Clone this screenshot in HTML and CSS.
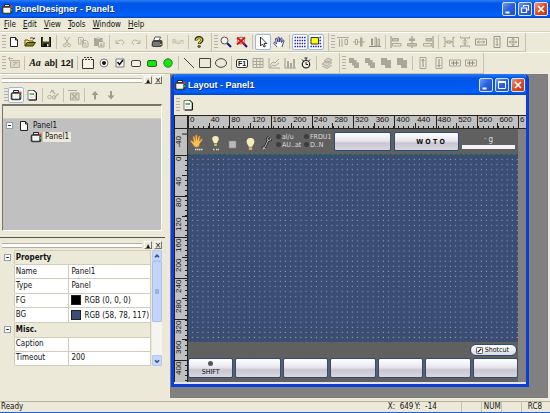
FILE: index.html
```html
<!DOCTYPE html>
<html lang="en">
<head>
    <meta charset="UTF-8">
    <meta name="viewport" content="width=device-width, initial-scale=1.0">
    <title>PanelDesigner - Panel1</title>
    <link rel="stylesheet" href="styles.css">
</head>
<body>
    <!-- Shared icons -->
    <svg class="sprite" aria-hidden="true">
        <symbol id="app" viewBox="0 0 12 12"><path d="M3.500 1.500h5v2h-5z" fill="#eee" stroke="#222"/><rect x=".7" y="3.200" width="10.600" height="8" rx="1.800" fill="#3a3a3a"/><rect x="2.300" y="4.700" width="7" height="5" rx=".6" fill="#f4f4f4"/><rect x="9.300" y="2.600" width="2.200" height="2.200" fill="#e33"/><rect x="9.800" y="6" width="1.400" height="2" fill="#2b2"/></symbol>
        <symbol id="new" viewBox="0 0 12 12"><path d="M2.500 1.500h5l2 2.500v6.500h-7z" fill="#fff" stroke="#222"/><path d="M7.500 1.500V4h2" fill="none" stroke="#222"/></symbol>
        <symbol id="open" viewBox="0 0 12 12"><path d="M1 10V4h3l1 1h4v1.500" fill="#ffe96b" stroke="#55520a"/><path d="M1 10l2-3.500h8.500L9 10z" fill="#8b860e" stroke="#33310a"/><path d="M6 2.500c1.500-1.200 3-1 4 .5M8.700 3h1.600V1.500" fill="none" stroke="#222" stroke-width=".8"/></symbol>
        <symbol id="save" viewBox="0 0 12 12"><path d="M1 1h10v10H1z" fill="#4a4a12"/><path d="M1.500 1.500h9v9h-9z" fill="none" stroke="#111"/><path d="M3 1h6v4.500H3z" fill="#eceada"/><path d="M3.500 7.500H9V11H3.500z" fill="#111"/><path d="M7 8h1.500v2.500H7z" fill="#ddd"/></symbol>
        <symbol id="cut" viewBox="0 0 12 12"><path d="M3.500 1l4 7M8.500 1l-4 7" fill="none" stroke="#b4b1a2"/><circle cx="3.800" cy="9.300" r="1.500" fill="none" stroke="#b4b1a2"/><circle cx="8.200" cy="9.300" r="1.500" fill="none" stroke="#b4b1a2"/></symbol>
        <symbol id="copy" viewBox="0 0 12 12"><path d="M1.500 1.500h4l1 1v5.500h-5zM5.500 4.500h4l1.500 1.500v5h-5.500z" fill="#ece9d8" stroke="#b4b1a2"/><path d="M3 4h2M3 6h2M7 7h2.500M7 9h2.500" stroke="#b4b1a2"/></symbol>
        <symbol id="paste" viewBox="0 0 12 12"><path d="M1 2h8.500v8H1z" fill="#aaa798"/><path d="M3.500 1h3.500v2H3.500z" fill="#d2cfbf"/><path d="M5.500 5.500H10l1 1v4.500H5.500z" fill="#e8e5d5" stroke="#aaa798"/><path d="M7 8h2.500M7 9.500h2.500" stroke="#aaa798"/></symbol>
        <symbol id="undo" viewBox="0 0 12 12"><path d="M2 4v3.500h3.500M2.500 7C4 4 8 3 9.500 5.500c.8 1.500 0 3-1.500 3" fill="none" stroke="#b4b1a2"/></symbol>
        <symbol id="redo" viewBox="0 0 12 12"><path d="M10 4v3.500H6.500M9.500 7C8 4 4 3 2.500 5.500c-.8 1.500 0 3 1.500 3" fill="none" stroke="#b4b1a2"/></symbol>
        <symbol id="print" viewBox="0 0 12 12"><path d="M4 1h5.500L8 5H2.500z" fill="#fff" stroke="#333" stroke-width=".8"/><path d="M1 5.500l2-1.500h7.500l1 1.500v4L9.500 11H2L.5 9.500z" fill="#444"/><path d="M2 7h7M2 9h7" stroke="#aaa"/><path d="M9 8.500h1.500" stroke="#dd3"/></symbol>
        <symbol id="help" viewBox="0 0 12 12"><path d="M3 4.500C3 .6 9.200.6 9 4c0 2-2.800 1.800-2.800 4" fill="none" stroke="#222" stroke-width="3"/><path d="M3.300 4.200C3.500 1.200 8.700 1.200 8.600 4c0 1.800-2.500 1.800-2.500 3.500" fill="none" stroke="#d6ce24" stroke-width="1.400"/><circle cx="6.100" cy="10.200" r="1.500" fill="#222"/><circle cx="6" cy="10" r=".8" fill="#d6ce24"/></symbol>
        <symbol id="zoomin" viewBox="0 0 12 12"><path d="M7 7l4 4" stroke="#14148c" stroke-width="2.200"/><circle cx="4.500" cy="4.500" r="3.500" fill="#f2f2ec" stroke="#555"/></symbol>
        <symbol id="zoomoff" viewBox="0 0 12 12"><path d="M7 7l4 4" stroke="#14148c" stroke-width="2.200"/><circle cx="5" cy="4.500" r="3.500" fill="#eee" stroke="#777"/><path d="M1 1.500l8 7M9 1.500l-8 7" stroke="#e01212" stroke-width="2"/></symbol>
        <symbol id="arrow" viewBox="0 0 12 12"><path d="M3.500 1v9l2-2 1.500 3 1.300-.6L7 7.500h2.800z" fill="#fff" stroke="#222" stroke-width=".9"/></symbol>
        <symbol id="pan" viewBox="0 0 12 12"><path d="M4 11L1 7.500c-.6-1 .5-1.600 1.200-.8L3.500 8 2.500 3c0-1 1.100-1.200 1.400-.2L5 6V1.800c0-1 1.300-1 1.400 0L6.700 6l1-3.500c.3-1 1.500-.7 1.300.3L8.600 6.500l1.200-2c.6-.8 1.500-.2 1.200.7L9.500 9 9 11" fill="#fff" stroke="#2a2a8c" stroke-width=".9"/></symbol>
        <symbol id="grid" viewBox="0 0 12 12"><path d="M.5 1.500h11M.5 4.500h11M.5 7.500h11M.5 10.500h11" stroke="#1818a0" stroke-width="1.400" stroke-dasharray="1.400 1"/></symbol>
        <symbol id="snap" viewBox="0 0 12 12"><path d="M.5 10.500h11M9.500 1.500h2.500M9.500 4.500h2.500M9.500 7.500h2.500" stroke="#1818a0" stroke-width="1.400" stroke-dasharray="1.400 1"/><path d="M1 1.500h7.500V8H1z" fill="#ffff10" stroke="#333"/></symbol>
        <symbol id="altop" viewBox="0 0 12 12"><path d="M0 1.500h12" stroke="#aaa798"/><path d="M2.500 3v8M5 3v8" stroke="#aaa798" /><path d="M8 3.500h2.500v5H8z" fill="none" stroke="#aaa798"/></symbol>
        <symbol id="almid" viewBox="0 0 12 12"><path d="M0 6h12" stroke="#aaa798"/><path d="M2.500 3.500h2v5h-2z" fill="#ece9d8" stroke="#aaa798"/><path d="M7 1.500h2.500v9H7z" fill="#aaa798"/></symbol>
        <symbol id="albot" viewBox="0 0 12 12"><path d="M0 10.500h12" stroke="#8f8c7e"/><path d="M2 2.500h2v7H2z" fill="#9c998b"/><path d="M6 1.500h1.500v8.500H6zM9 3h1.500v7H9z" fill="none" stroke="#aaa798"/></symbol>
        <symbol id="alleft" viewBox="0 0 12 12"><path d="M1 0v12" stroke="#8f8c7e"/><path d="M2.500 2.500h6v2.500h-6z" fill="#c4c1b1" stroke="#aaa798"/><path d="M2.500 7.500h8.500V10H2.500z" fill="none" stroke="#aaa798"/></symbol>
        <symbol id="alcen" viewBox="0 0 12 12"><path d="M6 0v12" stroke="#8f8c7e"/><path d="M3 2.500h6V5H3z" fill="#aaa798"/><path d="M1.500 7.500h9V10h-9z" fill="#c4c1b1" stroke="#aaa798"/></symbol>
        <symbol id="alright" viewBox="0 0 12 12"><path d="M11 0v12" stroke="#8f8c7e"/><path d="M4 2.500h5.500V5H4z" fill="#c4c1b1" stroke="#aaa798"/><path d="M1.500 7.500h8V10h-8z" fill="none" stroke="#aaa798"/></symbol>
        <symbol id="spacex" viewBox="0 0 12 12"><path d="M.5 1.500h1.500v9H.5M11.500 1.500H10v9h1.500M2.500 6h7M5.500 4l-2 2 2 2M6.500 4l2 2-2 2" fill="none" stroke="#9c998b" stroke-width=".9"/></symbol>
        <symbol id="spacey" viewBox="0 0 12 12"><path d="M1.500.5V2h9V.5M1.500 11.500V10h9v1.500M6 2.500v7M4 5.500l2-2 2 2M4 6.500l2 2 2-2" fill="none" stroke="#9c998b" stroke-width=".9"/></symbol>
        <symbol id="samew" viewBox="0 0 12 12"><path d="M.5 3h11v6H.5z" fill="none" stroke="#9c998b"/><path d="M2 6h8M4 4.500L2.500 6 4 7.500M8 4.500L9.500 6 8 7.500" fill="none" stroke="#9c998b" stroke-width=".9"/></symbol>
        <symbol id="sameh" viewBox="0 0 12 12"><path d="M3 .5h6v11H3z" fill="none" stroke="#9c998b"/><path d="M6 2v8M4.500 4L6 2.500 7.500 4M4.500 8L6 9.500 7.500 8" fill="none" stroke="#9c998b" stroke-width=".9"/></symbol>
        <symbol id="same" viewBox="0 0 12 12"><path d="M.5 1.500h11v9H.5z" fill="none" stroke="#9c998b"/><path d="M2 6h8M6 2v8M4 4.500L2.500 6 4 7.500M8 4.500L9.500 6 8 7.500M4.500 4L6 2.500 7.500 4M4.500 8L6 9.500 7.500 8" fill="none" stroke="#9c998b" stroke-width=".9"/></symbol>
        <symbol id="layout" viewBox="0 0 12 12"><path d="M2.500 3.500h9v7h-9z" fill="#ddd9c8" stroke="#b4b1a2"/><path d="M0 1.500h5M1.500 0v4M5 8.500l4-3M5 5.500h5" stroke="#b4b1a2"/></symbol>
        <symbol id="tabs" viewBox="0 0 12 12"><path d="M.5 2.500h11v9H.5z" fill="#f6f4ea" stroke="#333"/><path d="M2 .5h8" stroke="#333" stroke-dasharray="2 1"/><path d="M2 2.500h8" stroke="#f6f4ea" stroke-dasharray="1 2"/></symbol>
        <symbol id="radio" viewBox="0 0 12 12"><circle cx="6" cy="6" r="4" fill="#fff" stroke="#777"/><circle cx="6" cy="6" r="2" fill="#111"/></symbol>
        <symbol id="check" viewBox="0 0 12 12"><path d="M2 2h8v8H2z" fill="#fff" stroke="#777"/><path d="M3.500 5l2 2.500 3.500-4.500" fill="none" stroke="#111" stroke-width="1.600"/></symbol>
        <symbol id="btn" viewBox="0 0 12 12"><rect x="1.500" y="3.500" width="9" height="6" rx="1.500" fill="#f4f2e8" stroke="#444"/></symbol>
        <symbol id="gbtn" viewBox="0 0 12 12"><rect x="1.500" y="3.500" width="9" height="6" rx="1.500" fill="#14e614" stroke="#246424"/></symbol>
        <symbol id="lamp" viewBox="0 0 12 12"><circle cx="6" cy="6" r="4.200" fill="#14e614" stroke="#2b7a2b"/></symbol>
        <symbol id="line" viewBox="0 0 12 12"><path d="M1 1l10 10" stroke="#444"/></symbol>
        <symbol id="rect" viewBox="0 0 12 12"><path d="M.5 1.500h11v9H.5z" fill="none" stroke="#444"/></symbol>
        <symbol id="oval" viewBox="0 0 12 12"><ellipse cx="6" cy="6" rx="5.500" ry="4.300" fill="none" stroke="#444"/></symbol>
        <symbol id="table" viewBox="0 0 12 12"><path d="M1 1.500h10v9H1zM1 4.500h10M1 7.500h10M4.500 1.500v9M8 1.500v9" fill="none" stroke="#aaa798"/></symbol>
        <symbol id="chart" viewBox="0 0 12 12"><path d="M1 1v10h11M2 8l3-3 2 1 4-4M2 10l3-2 2 1 4-3" fill="none" stroke="#aaa798"/></symbol>
        <symbol id="bars" viewBox="0 0 12 12"><path d="M1 1v10h11" fill="none" stroke="#9c998b"/><path d="M4 4v6.500M7 6v4.500M10 2v8.500" stroke="#9c998b" stroke-width="1.600"/></symbol>
        <symbol id="timer" viewBox="0 0 12 12"><path d="M4.500 1h3M6 1v2M2 2.500l1.500 1.500M10 2.500L8.500 4" stroke="#222"/><circle cx="6" cy="7.200" r="3.700" fill="#f4f2e8" stroke="#222" stroke-width="1.200"/><path d="M6 5v2.500h2" fill="none" stroke="#222"/></symbol>
        <symbol id="stack" viewBox="0 0 12 12"><path d="M1 7l5-3 5 1.500-5 3.500zM1 9l5 2.500L11 8M3 4l4-3 4 2-4 3z" fill="#d8d5c5" stroke="#aaa798" stroke-width=".9"/></symbol>
        <symbol id="order1" viewBox="0 0 12 12"><path d="M1 1h5v2h2.500v2.500H11V11H6V8.500H4V6H1z" fill="#aaa798"/></symbol>
        <symbol id="order2" viewBox="0 0 12 12"><path d="M1 1h6v2h4v8H5V8H1z" fill="#aaa798"/></symbol>
        <symbol id="centy" viewBox="0 0 12 12"><path d="M3 .5h6v11H3z" fill="none" stroke="#aaa798"/><path d="M6 2v8M4.500 4L6 2.500 7.500 4" fill="none" stroke="#8f8c7e"/></symbol>
        <symbol id="centx" viewBox="0 0 12 12"><path d="M.5 3h11v6H.5z" fill="none" stroke="#aaa798"/><path d="M2 6h8M4.500 4v4M7.500 4v4" stroke="#8f8c7e"/></symbol>
        <symbol id="sheet" viewBox="0 0 12 12"><path d="M2 1.500h6l2 2v7.500H2z" fill="#fff" stroke="#777"/><path d="M7.500 1L10.500 4v7H3" fill="none" stroke="#111"/><path d="M3.500 5h4.500" stroke="#2f9a3f" stroke-width="1.400"/><path d="M3.500 8h5" stroke="#ccc"/></symbol>
        <symbol id="tool" viewBox="0 0 12 12"><path d="M4 1.500h3M3 4l2-2.500L8 5M7 9l4.500-4.500" fill="none" stroke="#b4b1a2" stroke-width="1.200"/><circle cx="2.500" cy="8" r="1.800" fill="none" stroke="#b4b1a2"/><circle cx="7" cy="8.500" r="1.800" fill="none" stroke="#b4b1a2"/></symbol>
        <symbol id="del" viewBox="0 0 12 12"><path d="M2.500 4h8.500v7H2.500z" fill="#ddd9c8" stroke="#aaa798"/><path d="M0 1.500h9M4 5l5 5M9 5l-5 5" stroke="#aaa798" stroke-width="1.200"/></symbol>
        <symbol id="up" viewBox="0 0 12 12"><path d="M6 2l3.500 4H7v4.500H5V6H2.500z" fill="#a09d8f"/></symbol>
        <symbol id="down" viewBox="0 0 12 12"><path d="M6 10.500L2.500 6.500H5V2h2v4.500h2.500z" fill="#a09d8f"/></symbol>
        <symbol id="min" viewBox="0 0 12 12"><path d="M2.500 8.500h4v2h-4z" fill="#fff"/></symbol>
        <symbol id="restore" viewBox="0 0 12 12"><path d="M4.500 4V2.500h5v4.500H8M2.500 5h5v4.500h-5z" fill="none" stroke="#fff" stroke-width="1.200"/></symbol>
        <symbol id="max" viewBox="0 0 12 12"><path d="M2.500 3.500h7v6h-7z" fill="none" stroke="#fff"/><path d="M2 2.800h8" stroke="#fff" stroke-width="1.600"/></symbol>
        <symbol id="close" viewBox="0 0 12 12"><path d="M3 3l6 6M9 3L3 9" stroke="#fff" stroke-width="1.700"/></symbol>
        <symbol id="bulb" viewBox="0 0 12 12"><path d="M6 .5c2.500 0 4 1.800 3.500 4C9.200 6 7.800 7 7.700 8.500H4.300C4.200 7 2.800 6 2.500 4.500c-.5-2.200 1-4 3.500-4z" fill="#f4edb8"/><path d="M4.500 9h3v2.500h-3z" fill="#c9b878"/></symbol>
    </svg>

    <header class="titlebar">
        <svg class="icon"><use href="#app"/></svg>
        <h1>PanelDesigner - Panel1</h1>
        <div class="controls">
            <button aria-label="Minimize"><svg class="icon"><use href="#min"/></svg></button>
            <button aria-label="Restore"><svg class="icon"><use href="#restore"/></svg></button>
            <button class="close" aria-label="Close"><svg class="icon"><use href="#close"/></svg></button>
        </div>
    </header>

    <nav class="menu">
        <button><u>F</u>ile</button>
        <button><u>E</u>dit</button>
        <button><u>V</u>iew</button>
        <button><u>T</u>ools</button>
        <button><u>W</u>indow</button>
        <button><u>H</u>elp</button>
    </nav>

    <div class="toolrow">
        <div class="toolbar">
            <button aria-label="New"><svg class="icon"><use href="#new"/></svg></button>
            <button aria-label="Open"><svg class="icon"><use href="#open"/></svg></button>
            <button aria-label="Save"><svg class="icon"><use href="#save"/></svg></button>
            <i></i>
            <button aria-label="Cut"><svg class="icon"><use href="#cut"/></svg></button>
            <button aria-label="Copy"><svg class="icon"><use href="#copy"/></svg></button>
            <button aria-label="Paste"><svg class="icon"><use href="#paste"/></svg></button>
            <i></i>
            <button aria-label="Undo"><svg class="icon"><use href="#undo"/></svg></button>
            <button aria-label="Redo"><svg class="icon"><use href="#redo"/></svg></button>
            <i></i>
            <button aria-label="Print"><svg class="icon"><use href="#print"/></svg></button>
            <i></i>
            <button class="run">Run</button>
            <i></i>
            <button aria-label="Help"><svg class="icon"><use href="#help"/></svg></button>
        </div>
        <div class="toolbar">
            <button aria-label="Zoom"><svg class="icon"><use href="#zoomin"/></svg></button>
            <button aria-label="Cancel zoom"><svg class="icon"><use href="#zoomoff"/></svg></button>
            <i></i>
            <button class="active" aria-label="Select"><svg class="icon"><use href="#arrow"/></svg></button>
            <button aria-label="Pan"><svg class="icon"><use href="#pan"/></svg></button>
            <i></i>
            <button class="active" aria-label="Grid"><svg class="icon"><use href="#grid"/></svg></button>
            <button class="active" aria-label="Snap"><svg class="icon"><use href="#snap"/></svg></button>
        </div>
        <div class="toolbar last">
            <button aria-label="Align top"><svg class="icon"><use href="#altop"/></svg></button>
            <button aria-label="Align middle"><svg class="icon"><use href="#almid"/></svg></button>
            <button aria-label="Align bottom"><svg class="icon"><use href="#albot"/></svg></button>
            <i></i>
            <button aria-label="Align left"><svg class="icon"><use href="#alleft"/></svg></button>
            <button aria-label="Align center"><svg class="icon"><use href="#alcen"/></svg></button>
            <button aria-label="Align right"><svg class="icon"><use href="#alright"/></svg></button>
            <i></i>
            <button aria-label="Space across"><svg class="icon"><use href="#spacex"/></svg></button>
            <button aria-label="Space down"><svg class="icon"><use href="#spacey"/></svg></button>
            <button aria-label="Same width"><svg class="icon"><use href="#samew"/></svg></button>
            <button aria-label="Same height"><svg class="icon"><use href="#sameh"/></svg></button>
            <button aria-label="Same size"><svg class="icon"><use href="#same"/></svg></button>
        </div>
    </div>

    <div class="toolrow">
        <div class="toolbar">
            <button aria-label="Layout"><svg class="icon"><use href="#layout"/></svg></button>
            <i></i>
            <button class="glyph italic">Aa</button>
            <button class="glyph">ab|</button>
            <button class="glyph">12|</button>
            <i></i>
            <button aria-label="Group"><svg class="icon"><use href="#tabs"/></svg></button>
            <button aria-label="Radio"><svg class="icon"><use href="#radio"/></svg></button>
            <button aria-label="Check box"><svg class="icon"><use href="#check"/></svg></button>
            <button aria-label="Button"><svg class="icon"><use href="#btn"/></svg></button>
            <button aria-label="Lit button"><svg class="icon"><use href="#gbtn"/></svg></button>
            <button aria-label="Lamp"><svg class="icon"><use href="#lamp"/></svg></button>
            <i></i>
            <button aria-label="Line"><svg class="icon"><use href="#line"/></svg></button>
            <button aria-label="Rectangle"><svg class="icon"><use href="#rect"/></svg></button>
            <button aria-label="Ellipse"><svg class="icon"><use href="#oval"/></svg></button>
            <i></i>
            <button class="fkey"><span>F1</span></button>
            <button aria-label="Table"><svg class="icon"><use href="#table"/></svg></button>
            <button aria-label="Line chart"><svg class="icon"><use href="#chart"/></svg></button>
            <button aria-label="Bar chart"><svg class="icon"><use href="#bars"/></svg></button>
            <button aria-label="Timer"><svg class="icon"><use href="#timer"/></svg></button>
            <i></i>
            <button aria-label="Library"><svg class="icon"><use href="#stack"/></svg></button>
        </div>
        <div class="toolbar last">
            <button aria-label="Forward"><svg class="icon"><use href="#order1"/></svg></button>
            <button aria-label="Backward"><svg class="icon"><use href="#order1"/></svg></button>
            <button aria-label="To front"><svg class="icon"><use href="#order2"/></svg></button>
            <button aria-label="To back"><svg class="icon"><use href="#order2"/></svg></button>
            <i></i>
            <button aria-label="Move to top"><svg class="icon"><use href="#centy"/></svg></button>
            <button aria-label="Move to bottom"><svg class="icon flip"><use href="#centy"/></svg></button>
            <button aria-label="Move to left"><svg class="icon"><use href="#centx"/></svg></button>
            <button aria-label="Move to right"><svg class="icon"><use href="#centx"/></svg></button>
        </div>
    </div>

    <main class="work">
        <aside class="dock">
            <section class="pane tree-pane">
                <div class="pane-head"><span class="rails"></span><button aria-label="Collapse">▴</button><button aria-label="Close pane">×</button></div>
                <div class="toolbar pane-tools">
                    <button class="active" aria-label="Panels"><svg class="icon"><use href="#app"/></svg></button>
                    <button aria-label="Sheet"><svg class="icon"><use href="#sheet"/></svg></button>
                    <i></i>
                    <button aria-label="Tools"><svg class="icon"><use href="#tool"/></svg></button>
                    <i></i>
                    <button aria-label="Delete"><svg class="icon"><use href="#del"/></svg></button>
                    <i></i>
                    <button aria-label="Up"><svg class="icon"><use href="#up"/></svg></button>
                    <button aria-label="Down"><svg class="icon"><use href="#down"/></svg></button>
                </div>
                <div class="tree">
                    <div class="tree-head"></div>
                    <ul>
                        <li><span class="toggle"></span><svg class="icon"><use href="#new"/></svg><span class="name">Panel1</span></li>
                        <li class="child"><svg class="icon"><use href="#app"/></svg><span class="name selected">Panel1</span></li>
                    </ul>
                </div>
            </section>
            <section class="pane prop-pane">
                <div class="pane-head"><span class="rails"></span><button aria-label="Collapse">▴</button><button aria-label="Close pane">×</button></div>
                <div class="props">
                    <table>
                        <colgroup><col class="col-mark"><col class="col-key"><col></colgroup>
                        <tr class="group"><td class="mark"><span class="toggle"></span></td><th colspan="2">Property</th></tr>
                        <tr><td class="mark"></td><td>Name</td><td class="value">Panel1</td></tr>
                        <tr><td class="mark"></td><td>Type</td><td class="value">Panel</td></tr>
                        <tr><td class="mark"></td><td>FG</td><td class="value"><span class="swatch black"></span>RGB (0, 0, 0)</td></tr>
                        <tr><td class="mark"></td><td>BG</td><td class="value"><span class="swatch navy"></span>RGB (58, 78, 117)</td></tr>
                        <tr class="group"><td class="mark"><span class="toggle"></span></td><th colspan="2">Misc.</th></tr>
                        <tr><td class="mark"></td><td>Caption</td><td class="value"></td></tr>
                        <tr><td class="mark"></td><td>Timeout</td><td class="value">200</td></tr>
                    </table>
                    <div class="scroll">
                        <button aria-label="Scroll up"><svg viewBox="0 0 10 10"><path d="M2.500 6.500L5 4l2.500 2.500"/></svg></button>
                        <span class="thumb"></span>
                        <button aria-label="Scroll down"><svg viewBox="0 0 10 10"><path d="M2.500 4L5 6.500 7.500 4"/></svg></button>
                    </div>
                </div>
            </section>
        </aside>

        <div class="mdi">
            <section class="window">
                <header class="titlebar">
                    <svg class="icon"><use href="#app"/></svg>
                    <h2>Layout - Panel1</h2>
                    <div class="controls">
                        <button aria-label="Minimize"><svg class="icon"><use href="#min"/></svg></button>
                        <button aria-label="Maximize"><svg class="icon"><use href="#max"/></svg></button>
                        <button class="close" aria-label="Close"><svg class="icon"><use href="#close"/></svg></button>
                    </div>
                </header>
                <div class="toolbar window-tools">
                    <button aria-label="Sheet"><svg class="icon"><use href="#sheet"/></svg></button>
                </div>
                <div class="editor">
                    <div class="corner"></div>
                    <div class="ruler-x">
                        <div class="scale">
                            <span>0</span><span>40</span><span>80</span><span>120</span><span>160</span><span>200</span><span>240</span><span>280</span><span>320</span><span>360</span><span>400</span><span>440</span><span>480</span><span>520</span><span>560</span><span>600</span>
                        </div>
                        <span class="end">6</span>
                    </div>
                    <div class="ruler-y">
                        <div class="before"><span>-40</span></div>
                        <div class="scale">
                            <span>0</span><span>40</span><span>80</span><span>120</span><span>160</span><span>200</span><span>240</span><span>280</span><span>320</span><span>360</span><span>400</span>
                        </div>
                    </div>
                    <div class="screen">
                        <div class="top">
                            <svg class="lights" viewBox="0 0 84 24">
                                <path d="M7 17l-4-5c-1-1.500.7-2 1.500-1l1.500 1.500L5 7c0-1 1.200-1.200 1.500-.2l1 4V5.500c0-1 1.400-1 1.500 0l.4 5 1.200-4c.3-1 1.500-.6 1.300.4l-.7 4.500 2-2.400c.8-.8 1.600 0 1 1L11.500 14l-1 3z" fill="#f8c258" stroke="#c07818" stroke-width=".5"/>
                                <path d="M7 19.500h8M25 19.500h2M28 19.500h3" stroke="#ddd" stroke-width="1.400" stroke-dasharray="1.500 .5"/>
                                <use href="#bulb" x="22" y="5" width="11" height="12"/>
                                <path d="M41 11h7v7h-7z" fill="#b9b9b9" stroke="#858585" stroke-width=".6"/>
                                <use href="#bulb" x="56" y="7" width="13" height="14"/>
                                <path d="M75 20.500v-2.500l2-1 3-6.500-.5-2 1.500-2M80 10.500l2.500-.5.5-2" fill="none" stroke="#2c2c2c" stroke-width="2.600"/>
                                <path d="M75 20.500v-2.500l2-1 3-6.500-.5-2 1.500-2M80 10.500l2.500-.5.5-2M75 18l2.500 1" fill="none" stroke="#c4c4c4" stroke-width=".9"/>
                            </svg>
                            <div class="flags">
                                <span>al/u</span><span>FRDU1</span>
                                <span>AU..at</span><span>D..N</span>
                            </div>
                            <button class="key"></button>
                            <button class="key word">W O T O</button>
                            <div class="level"><span>· g</span><b></b></div>
                        </div>
                        <svg class="dots" viewBox="0 0 640 368" preserveAspectRatio="none">
                            <defs><pattern id="dot" width="10" height="10" patternUnits="userSpaceOnUse"><rect x="8" y="8" width="2" height="2" fill="#a3a59f"/></pattern></defs>
                            <rect width="640" height="368" fill="#3a4e75"/>
                            <rect width="640" height="368" fill="url(#dot)"/>
                        </svg>
                        <div class="bottom">
                            <button class="shortcut"><svg viewBox="0 0 8 8"><rect x=".5" y=".5" width="7" height="7" rx="1" fill="#fff" stroke="#444"/><path d="M2 6l4-4" stroke="#222" stroke-width="1.300"/></svg>Shotcut</button>
                            <div class="keys">
                                <button class="key shift"><i></i>SHIFT</button>
                                <button class="key"></button>
                                <button class="key"></button>
                                <button class="key"></button>
                                <button class="key"></button>
                                <button class="key"></button>
                                <button class="key"></button>
                            </div>
                        </div>
                    </div>
                </div>
            </section>
        </div>
    </main>

    <footer class="status">
        <span class="ready">Ready</span>
        <span class="pos-x">X:&nbsp; 649</span>
        <span class="pos-y">Y:&nbsp; -14</span>
        <span class="cell"></span>
        <span class="cell num">NUM</span>
        <span class="cell"></span>
        <span class="rc">RC8</span>
    </footer>
</body>
</html>
```
FILE: styles.css
```css
* {
    box-sizing: border-box;
}
body {
    margin: 0;
    height: 100vh;
    display: flex;
    flex-direction: column;
    background: #ece9d8;
    color: #111;
    font-family: "DejaVu Sans Condensed", "Open Sans", sans-serif;
    font-size: 8px;
    line-height: 10px;
    overflow: hidden;
}
button {
    margin: 0;
    padding: 0;
    border: none;
    background: none;
    color: inherit;
    font: inherit;
}
.sprite {
    display: none;
}
.icon {
    width: 12px;
    height: 12px;
    flex: none;
}

/* Title bars */
.titlebar {
    display: flex;
    align-items: center;
    gap: 2px;
    height: 18px;
    padding: 0 2px 0 1px;
    background: linear-gradient(#2a7cf4, #0055e5 20%, #0058ee 60%, #0062fb 85%, #0045c4);
    color: #fff;
}
.titlebar h1, .titlebar h2 {
    flex: 1;
    margin: 0;
    font-family: "Liberation Sans", sans-serif;
    font-size: 9px;
    font-weight: bold;
    text-shadow: 1px 1px #0a2f8c;
}
.controls {
    display: flex;
    gap: 2px;
}
.controls button {
    display: flex;
    align-items: center;
    justify-content: center;
    width: 14px;
    height: 14px;
    border: 1px solid #d5e2fb;
    border-radius: 2px;
    background: linear-gradient(135deg, #6f9cf5, #2a5fe0 50%, #2250c8);
}
.controls .close {
    background: linear-gradient(135deg, #f09a80, #dd4a22 50%, #c23a14);
}

/* Menu */
.menu {
    display: flex;
    gap: 7px;
    height: 14px;
    padding: 0 4px;
    border-bottom: 1px solid #d4d0bf;
}

/* Toolbars */
.toolrow {
    display: flex;
    height: 20px;
    border-top: 1px solid #fff;
}
.toolrow + .toolrow {
    height: 22px;
}
.toolbar {
    display: flex;
    align-items: center;
    padding-right: 4px;
    border-bottom: 1px solid #c5c2b2;
}
.toolbar::before {
    content: "";
    width: 4px;
    height: 14px;
    margin: 0 0 0 2px;
    background: repeating-linear-gradient(#b5b2a2 0 1px, transparent 1px 3px);
}
.toolbar + .toolbar {
    border-left: 1px solid #c5c2b2;
}
.toolbar.last {
    border-right: 1px solid #c5c2b2;
}
.toolbar button {
    display: flex;
    align-items: center;
    justify-content: center;
    width: 16px;
    height: 16px;
}
.toolbar > i {
    width: 1px;
    height: 14px;
    margin: 0 2px;
    background: #c5c2b2;
}
.toolbar .active {
    border: 1px solid #9db8d8;
    border-radius: 2px;
    background: #fff;
}
.toolbar .run {
    font-size: 7px;
    color: #b4b1a2;
}
.toolbar .glyph {
    font-family: "Liberation Sans", sans-serif;
    font-size: 9px;
    font-weight: bold;
}
.toolbar .italic {
    font-family: "Liberation Serif", serif;
    font-size: 10px;
    font-style: italic;
}
.fkey span {
    padding: 0 1px;
    border: 1px solid #333;
    border-radius: 2px;
    background: #fff;
    font: bold 7px/7px "Liberation Sans", sans-serif;
}
.flip {
    transform: rotate(180deg);
}

/* Docked panes */
.work {
    flex: 1;
    display: flex;
    min-height: 0;
}
.dock {
    width: 165px;
    display: flex;
    flex-direction: column;
    border-top: 1px solid #fff;
}
.pane {
    display: flex;
    flex-direction: column;
    padding: 0 3px 0 2px;
}
.tree-pane {
    flex: 1;
    padding-bottom: 6px;
    border-bottom: 1px solid #55534a;
}
.prop-pane {
    padding-top: 2px;
    padding-bottom: 35px;
}
.pane-head {
    display: flex;
    align-items: center;
    gap: 2px;
    height: 10px;
}
.rails {
    flex: 1;
    height: 5px;
    border: 1px solid #b5b2a2;
    border-width: 1px 0;
    background: #fff;
}
.pane-head button {
    width: 8px;
    height: 8px;
    border: 1px solid;
    border-color: #fff #77756a #77756a #fff;
    font-size: 8px;
    line-height: 5px;
}
.pane-tools {
    height: 19px;
    border-bottom: none;
}
.tree {
    flex: 1;
    border: 1px solid #fff;
    border-top: 2px solid #77756a;
    border-left-color: #77756a;
    background: #c0c0c0;
}
.tree-head {
    height: 13px;
    background: #ece9d8;
    border-bottom: 1px solid #d0cdbd;
}
.tree ul {
    margin: 0;
    padding: 1px 3px;
    list-style: none;
}
.tree li {
    display: flex;
    align-items: center;
    height: 11px;
}
.tree .child {
    padding-left: 24px;
}
.tree li > .toggle {
    margin-right: 5px;
}
.tree .name {
    margin-left: 1px;
    padding: 0 2px;
}
.tree .selected {
    background: #ece9d8;
}
.toggle {
    display: block;
    width: 7px;
    height: 7px;
    border: 1px solid #8f9db0;
    background: linear-gradient(#333, #333) center / 3px 1px no-repeat #fff;
}

/* Property grid */
.props {
    display: flex;
    gap: 1px;
    height: 116px;
}
.props table {
    flex: 1;
    height: 116px;
    border-collapse: collapse;
    table-layout: fixed;
    background: #fff;
}
.props td, .props th {
    padding: 0 1px;
    border: 1px solid #d0cdbd;
    text-align: left;
    white-space: nowrap;
}
.props .value {
    padding-left: 2px;
}
.props .mark, .props .group td, .props .group th {
    background: #ece9d8;
}
.props .mark {
    border-color: #ece9d8 #d0cdbd #ece9d8 #ece9d8;
}
.col-mark {
    width: 12px;
}
.col-key {
    width: 57px;
}
.swatch {
    display: inline-block;
    width: 10px;
    height: 10px;
    margin-right: 3px;
    border: 1px solid #222;
    vertical-align: middle;
}
.black {
    background: #000;
}
.navy {
    background: #3a4e75;
}
.scroll {
    display: flex;
    flex-direction: column;
    width: 10px;
    background: #f5f4ee;
}
.scroll button {
    width: 10px;
    height: 11px;
    border: 1px solid #b5c8f2;
    border-radius: 1px;
    background: #c6d6fc;
}
.scroll button:last-child {
    margin-top: auto;
}
.scroll svg {
    display: block;
    fill: none;
    stroke: #33507e;
    stroke-width: 2;
}
.thumb {
    height: 61px;
    border: 1px solid #a9bff0;
    border-radius: 1px;
    background: linear-gradient(#98b0e8, #98b0e8) center / 4px 5px no-repeat #c4d4fb;
}

/* Layout window */
.mdi {
    flex: 1;
    display: flex;
    margin-right: 2px;
    margin-bottom: 3px;
    padding: 0 19px 11px 1px;
    border-left: 5px solid #ece9d8;
    background: #808080;
}
.window {
    flex: 1;
    display: flex;
    flex-direction: column;
    min-width: 0;
    border: 3px solid #0a3fdc;
    border-top: none;
    border-radius: 5px 5px 0 0;
    background: #ece9d8;
    overflow: hidden;
}
.window .titlebar {
    height: 21px;
    padding: 0 1px 0 0;
}
.window-tools {
    height: 20px;
    border-bottom: none;
}
.editor {
    flex: 1;
    display: grid;
    grid-template-columns: 14px 1fr;
    grid-template-rows: 13px 1fr;
    min-height: 0;
    border-top: 1px solid #222;
    border-bottom: 2px solid #e4e4ea;
    background: #808080;
}
.corner, .ruler-x, .ruler-y {
    background: #c0c0c0;
    border: 0 solid #222;
    font-family: "Liberation Sans", sans-serif;
    line-height: 8px;
    overflow: hidden;
}
.corner {
    border-width: 0 1px 1px 1px;
}
.ruler-x {
    display: flex;
    border-bottom-width: 1px;
}
.ruler-x .scale {
    flex: 1;
    display: flex;
    background: repeating-linear-gradient(90deg, #222 0 1px, transparent 1px 5px) bottom / 100% 2px no-repeat;
}
.ruler-x .scale span {
    flex: 1 1 0;
    width: 0;
    padding-left: 2px;
    background: linear-gradient(#222, #222) left bottom / 1px 5px no-repeat;
}
.ruler-x .scale span:nth-child(odd) {
    background-size: 1px 100%;
}
.ruler-x .end {
    width: 8px;
    padding-left: 1px;
    border-left: 1px solid #222;
}
.ruler-y {
    display: flex;
    flex-direction: column;
    border-width: 0 1px;
}
.ruler-y .before {
    height: 26px;
    padding-top: 5px;
}
.ruler-y span {
    display: block;
    width: 100%;
    writing-mode: vertical-rl;
    transform: rotate(180deg);
    text-align: right;
    padding-bottom: 2px;
    background: linear-gradient(#222, #222) left bottom / 5px 1px no-repeat;
}
.ruler-y .scale {
    flex: 1;
    display: grid;
    grid-template-rows: repeat(5, 20px 21px);
    grid-auto-rows: 21px;
    background: repeating-linear-gradient(#222 0 1px, transparent 1px 5px) right / 2px 100% no-repeat;
}
.ruler-y .scale span:nth-child(odd) {
    background-size: 100% 1px;
}
.screen {
    display: flex;
    flex-direction: column;
    min-height: 0;
    margin-right: 8px;
    background: #606060;
}
.top {
    display: flex;
    align-items: center;
    gap: 3px;
    height: 26px;
    border-bottom: 1px dashed #0f6a58;
}
.lights {
    flex: none;
    width: 84px;
    height: 24px;
}
.flags {
    flex: none;
    display: grid;
    grid-template-columns: 28px 28px;
    gap: 1px 0;
    width: 56px;
    padding-left: 1px;
    color: #ddd;
    font-size: 7px;
    line-height: 7px;
}
.flags span {
    white-space: nowrap;
}
.flags span::before {
    content: "";
    display: inline-block;
    width: 5px;
    height: 5px;
    margin-right: 1px;
    border-radius: 50%;
    background: #3c3c3c;
}
.top .key, .keys .key {
    border: 1px solid #2d4c78;
    border-radius: 2px;
    background: linear-gradient(#fff, #e9e7ee 45%, #c9c6d0 60%, #d8d6de);
}
.top .key {
    flex: 1;
    height: 19px;
}
.top .word {
    padding-left: 8px;
    font-size: 7px;
    font-weight: bold;
}
.level {
    flex: none;
    display: flex;
    flex-direction: column;
    align-items: center;
    width: 56px;
    padding-right: 3px;
    color: #ddd;
}
.level b {
    width: 100%;
    height: 4px;
    background: #f4f4f8;
}
.dots {
    flex: 1;
    width: 100%;
    min-height: 0;
}
.bottom {
    display: flex;
    flex-direction: column;
    padding: 2px 0 4px;
}
.shortcut {
    align-self: flex-end;
    display: flex;
    align-items: center;
    gap: 2px;
    height: 12px;
    margin-right: 1px;
    padding: 0 7px 0 5px;
    border: 1px solid #2d4c78;
    border-radius: 6px;
    background: linear-gradient(#fff, #dcdae6);
    font-size: 7px;
}
.shortcut svg {
    width: 7px;
    height: 7px;
}
.keys {
    display: flex;
    gap: 2px;
    margin-top: 2px;
}
.keys .key {
    flex: 1;
    height: 20px;
}
.keys .shift {
    display: flex;
    flex-direction: column;
    align-items: center;
    justify-content: center;
    gap: 2px;
    font-size: 7px;
    line-height: 8px;
}
.shift i {
    width: 5px;
    height: 5px;
    border-radius: 50%;
    background: #555;
}

/* Status bar */
.status {
    display: flex;
    align-items: center;
    height: 12px;
    padding: 0 8px 0 1px;
    border-top: 1px solid #b5b2a2;
    border-bottom: 1px solid #1a63d8;
}
.ready {
    flex: 1;
}
.pos-x {
    width: 27px;
    white-space: nowrap;
}
.pos-y {
    width: 46px;
}
.cell {
    width: 20px;
    height: 10px;
    border-left: 1px solid #c5c2b2;
}
.cell.num {
    padding-left: 2px;
}
.rc {
    padding-left: 6px;
    border-left: 1px solid #c5c2b2;
}
```
